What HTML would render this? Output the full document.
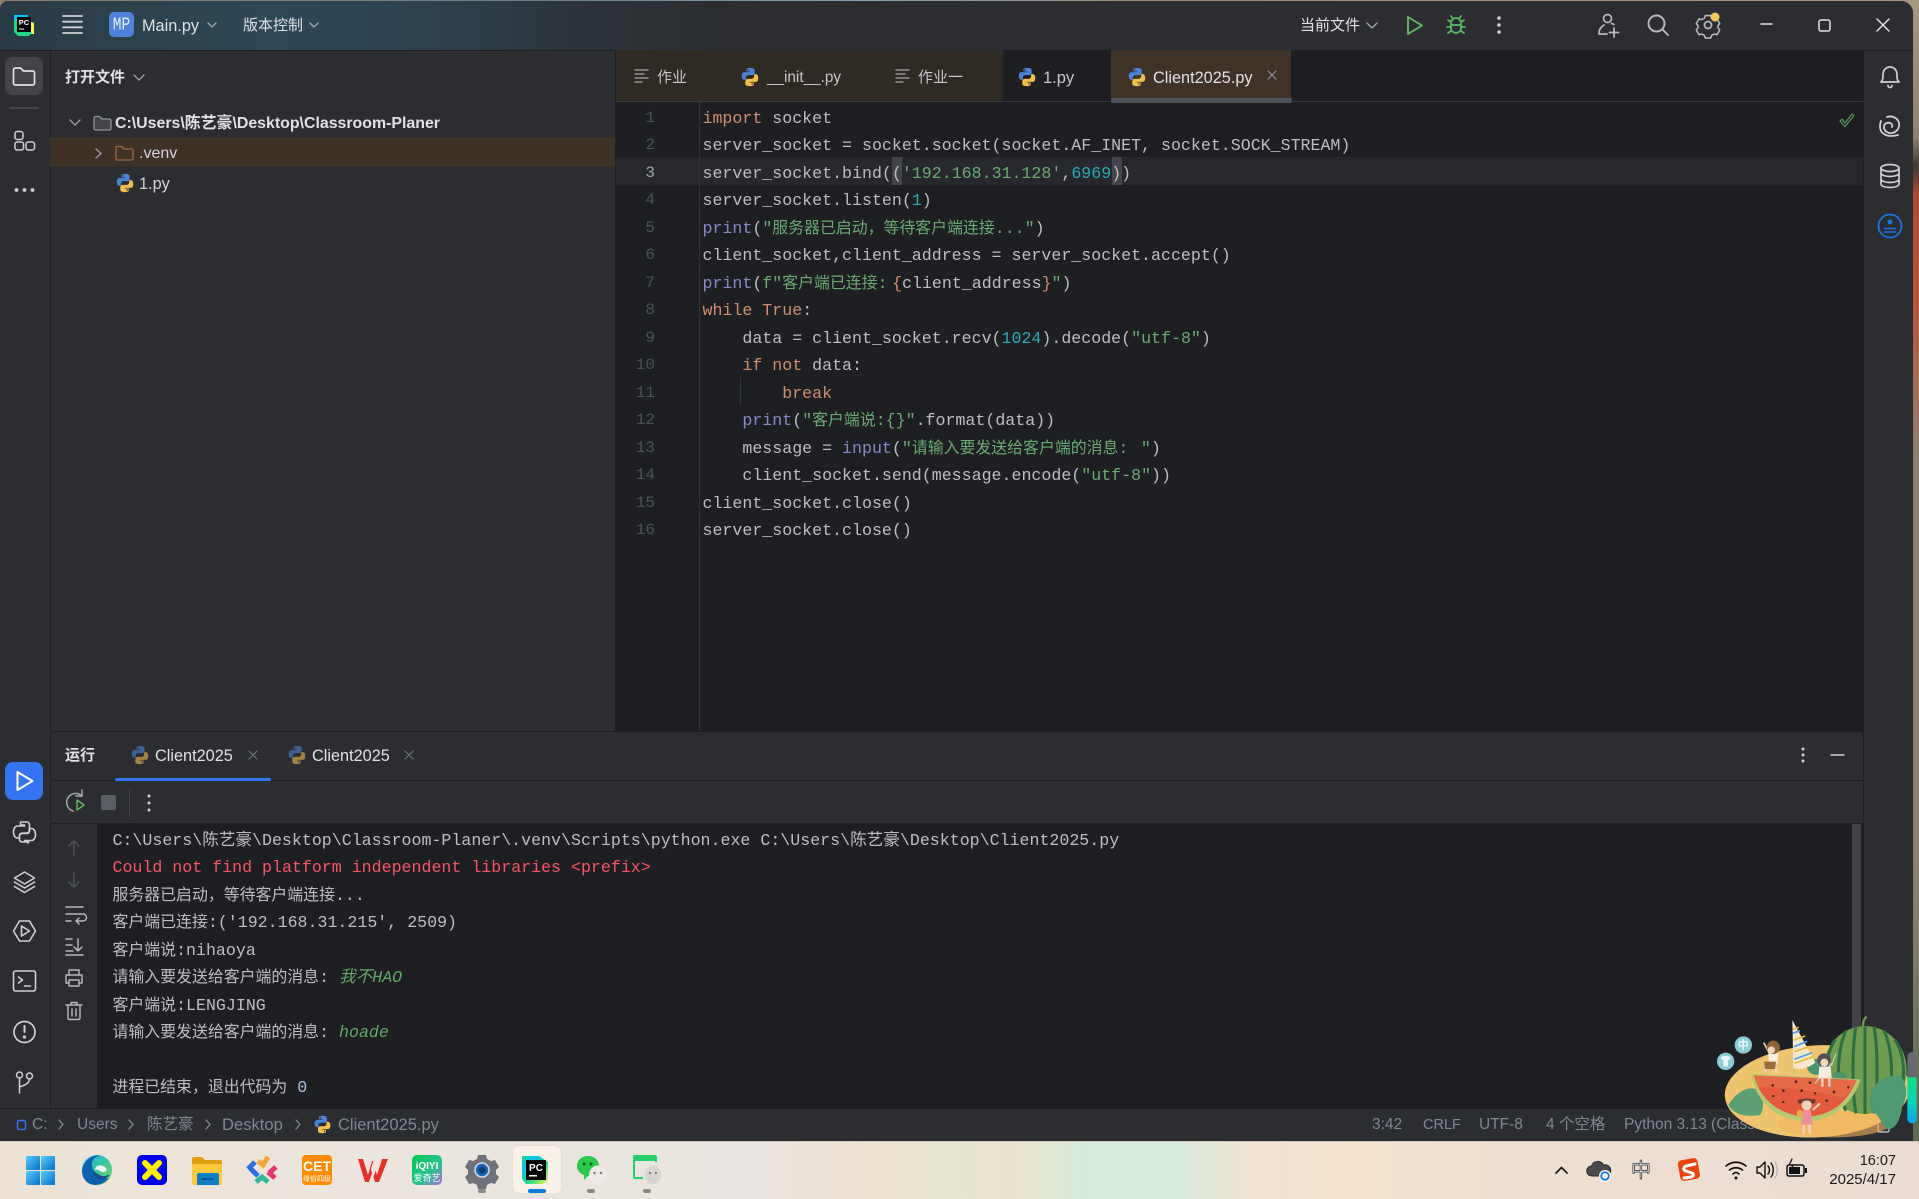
<!DOCTYPE html>
<html lang="zh">
<head>
<meta charset="utf-8">
<title>PyCharm</title>
<style>
html,body{margin:0;padding:0;width:1919px;height:1199px;overflow:hidden;background:#8f8270}
body{position:relative;font-family:"Liberation Sans","Noto Sans CJK SC",sans-serif;color:#ced0d6}
.b{position:absolute}
.t{position:absolute;white-space:pre;font-size:15.5px;line-height:22px;height:22px}
.m{position:absolute;white-space:pre;font-family:"Liberation Mono","Noto Sans CJK SC",monospace;font-size:16.63px;line-height:27.5px;height:27.5px;color:#bcbec4}
.n{position:absolute;width:40px;text-align:right;left:615px;font-family:"Liberation Mono",monospace;font-size:16px;line-height:27.5px;color:#4b5059}
.k{color:#cf8e6d}.s{color:#6aab73}.d{color:#2aacb8}.f{color:#8888c6}
.c{font-size:15.9px}
.h{background:#43454a}
.i{color:#5fa865;font-style:italic}
.st{color:#7f8894;font-size:15.5px}
svg text{font-family:"Liberation Sans","Noto Sans CJK SC",sans-serif}
</style>
</head>
<body>
<!-- wallpaper -->
<div class="b" style="left:0;top:0;width:1919px;height:2px;background:linear-gradient(90deg,#8a7d6c,#6b7f88 30%,#88a0b0 45%,#9a8a76 60%,#a89680 100%)"></div>
<div class="b" style="left:1905px;top:0;width:14px;height:1141px;background:linear-gradient(180deg,#a89680 0,#8f8270 12%,#3f3a33 14.5%,#a94a36 17%,#b5553c 26%,#8f8270 40%,#8f8270 75%,#5c6b50 100%)"></div>

<!-- window -->
<div class="b" style="left:0;top:1px;width:1913px;height:1140px;background:#2b2d30;border-radius:8px 12px 0 0;overflow:hidden">
  <div class="b" style="left:0;top:0;width:1913px;height:49px;background:linear-gradient(90deg,#2a3a44 0,#2f4855 14%,#2e4452 20%,#2c3439 30%,#2b2d30 38%)"></div>
  <div class="b" style="left:0;top:49px;width:1913px;height:1px;background:#1e1f22"></div>
</div>

<!-- project panel -->
<div class="b" style="left:50px;top:50px;width:1px;height:1058px;background:#1e1f22"></div>
<div class="b" style="left:615px;top:50px;width:1px;height:681px;background:#1e1f22"></div>
<div class="b" style="left:50px;top:137px;width:565px;height:30px;background:#3e3126"></div>

<!-- editor -->
<div class="b" style="left:616px;top:50px;width:1247px;height:681px;background:#1e1f22"></div>
<div class="b" style="left:616px;top:50px;width:387px;height:51px;background:#302a24"></div>
<div class="b" style="left:1111px;top:50px;width:180px;height:51px;background:#3f3226"></div>
<div class="b" style="left:616px;top:101px;width:1247px;height:1px;background:#36383d"></div>
<div class="b" style="left:1111px;top:98px;width:181px;height:5px;background:#4e5157;border-radius:2px"></div>
<div class="b" style="left:616px;top:157px;width:1247px;height:28px;background:#26282e"></div>
<div class="b" style="left:699px;top:102px;width:1px;height:629px;background:#313438"></div>
<div class="b" style="left:740px;top:377px;width:1px;height:28px;background:#313438"></div>
<div class="b h" style="left:892px;top:157px;width:10px;height:28px"></div>
<div class="b h" style="left:1112px;top:157px;width:10px;height:28px"></div>

<!-- run panel -->
<div class="b" style="left:51px;top:731px;width:1812px;height:1px;background:#1e1f22"></div>
<div class="b" style="left:51px;top:780px;width:1812px;height:1px;background:#1e1f22"></div>
<div class="b" style="left:115px;top:778px;width:156px;height:3px;background:#3574f0;border-radius:2px"></div>
<div class="b" style="left:98px;top:824px;width:1765px;height:284px;background:#1e1f22"></div>
<div class="b" style="left:51px;top:823px;width:1812px;height:1px;background:#1e1f22"></div>
<div class="b" style="left:97px;top:824px;width:1px;height:284px;background:#1e1f22"></div>
<div class="b" style="left:1852px;top:824px;width:9px;height:230px;background:#414347;border-radius:1px"></div>
<div class="b" style="left:129px;top:790px;width:1px;height:27px;background:#43454a"></div>

<!-- right stripe -->
<div class="b" style="left:1863px;top:50px;width:1px;height:1058px;background:#1e1f22"></div>
<!-- status -->
<div class="b" style="left:0;top:1108px;width:1913px;height:33px;background:#2b2d30;border-top:1px solid #1e1f22;box-sizing:border-box"></div>

<!-- left stripe boxes -->
<div class="b" style="left:5px;top:57px;width:38px;height:38px;background:#43454a;border-radius:8px"></div>
<div class="b" style="left:9px;top:107px;width:30px;height:2px;background:#43454a"></div>
<div class="b" style="left:5px;top:762px;width:38px;height:38px;background:#3574f0;border-radius:8px"></div>

<!-- taskbar -->
<div class="b" style="left:0;top:1141px;width:1919px;height:58px;background:linear-gradient(90deg,#ece3d6 0,#ebe5dd 350px,#e9e4df 760px,#eee2d0 880px,#e6e5cf 940px,#e9e4cc 1020px,#d5ebdc 1090px,#d5ebdc 1170px,#f0e3d2 1250px,#f4e2cd 1350px,#eee0d0 1500px,#ebdcd3 1919px)"></div>
<div class="b" style="left:0;top:1141px;width:1919px;height:1px;background:#d4c8bb"></div>
<div class="b" style="left:513px;top:1146px;width:48px;height:47px;background:#f8f2e8;border-radius:5px;box-shadow:0 0 1px #cfc6b8"></div>

<!-- ICONS -->
<svg class="b" style="left:0;top:0" width="1919" height="1199" viewBox="0 0 1919 1199" fill="none" stroke-linecap="round" stroke-linejoin="round">
<defs>
<symbol id="py" viewBox="0 0 24 24" overflow="visible">
  <path fill="#4a82d4" d="M11.9 2C7.6 2 8 3.8 8 3.8V6h4.2v.7H5.9S3 6.4 3 10.8s2.6 4.3 2.6 4.3h1.9v-2.2s-.1-2.9 2.8-2.9h4.2s2.6 0 2.6-2.6V4.7S17.5 2 11.9 2zM9.600 3.400a.8.8 0 1 1 0 1.600.8.8 0 0 1 0-1.600z"/>
  <path fill="#f0bf50" d="M12.100 22c4.300 0 3.900-1.800 3.900-1.800V18h-4.200v-.7h6.300s2.900.3 2.900-4.100-2.600-4.300-2.600-4.300h-1.900v2.200s.1 2.900-2.800 2.900H9.500s-2.600 0-2.600 2.600v3.100S6.500 22 12.100 22zm2.300-1.400a.8.8 0 1 1 0-1.600.8.8 0 0 1 0 1.600z"/>
</symbol>
<linearGradient id="pc" x1="0" y1="0" x2="1" y2="1"><stop offset="0" stop-color="#21d789"/><stop offset=".25" stop-color="#07c3f2"/><stop offset=".6" stop-color="#21d789"/><stop offset="1" stop-color="#fcf84a"/></linearGradient>
<linearGradient id="wg" x1="0" y1="0" x2="1" y2="1"><stop offset="0" stop-color="#5ccbfa"/><stop offset="1" stop-color="#0470c8"/></linearGradient>
<linearGradient id="edge" x1="0" y1="0" x2="1" y2="1"><stop offset="0" stop-color="#2fa9e0"/><stop offset=".5" stop-color="#38c6a0"/><stop offset="1" stop-color="#7ed957"/></linearGradient>
<linearGradient id="iq" x1="0" y1="0" x2="1" y2="1"><stop offset="0" stop-color="#00c853"/><stop offset=".6" stop-color="#2bc08f"/><stop offset="1" stop-color="#a66fd8"/></linearGradient>
</defs>

<!-- title bar -->
<g transform="translate(14,14)">
  <path fill="#07c3f2" d="M0 1h14v8H0z"/>
  <path fill="#fcf84a" d="M12 6l8 3v11h-6z"/>
  <path fill="#21d789" d="M0 6h6v16H4l-4-4z"/>
  <path fill="#21d789" d="M4 18h14l-3 4H6z"/>
  <rect x="3" y="3" width="14" height="15" fill="#000"/>
  <text x="10" y="11" fill="#fff" font-size="7.500" font-weight="700" text-anchor="middle">PC</text>
  <rect x="5" y="14.500" width="5" height="1" fill="#fff"/>
</g>
<g stroke="#ced0d6" stroke-width="1.800"><path d="M63 16h19M63 21.700h19M63 27.300h19M63 33h19"/></g>
<rect x="109" y="12" width="25" height="25" rx="5" fill="#4e82d8"/>
<g stroke="#a4a7ad" stroke-width="1.300">
  <path d="M208 23l4 4 4-4M310 23l4 4 4-4M1367 23l5 5 5-5"/>
</g>
<path d="M1408 17l14 8.500-14 8.500z" stroke="#5fb865" stroke-width="1.900"/>
<g transform="translate(1456,25)" stroke="#5fb865" stroke-width="1.700">
  <path d="M-5-2a5 5 0 0 1 10 0v5a5 5 0 0 1-10 0zM-5 0h10M-3-6l-2-3M3-6l2-3M-5-3l-3-2M5-3l3-2M-5 2h-4M5 2h4M-5 6l-3 2M5 6l3 2"/>
</g>
<g fill="#ced0d6"><circle cx="1499" cy="18" r="1.800"/><circle cx="1499" cy="25" r="1.800"/><circle cx="1499" cy="32" r="1.800"/></g>
<g transform="translate(1609,25)" stroke="#b8bac0" stroke-width="1.700">
  <circle cx="-1.500" cy="-6.500" r="4"/><path d="M-10 9c0-5 2-7 5-9M5-.5c-1-.5-2-1-2.500-1M-10 9h8M5 3v9M0.500 7.500h9"/>
</g>
<g transform="translate(1658,25)" stroke="#b8bac0" stroke-width="1.900"><circle cx="-1.500" cy="-1.500" r="8"/><path d="M4.500 4.500l5.500 5.500"/></g>
<g transform="translate(1708,25)" stroke="#b8bac0" stroke-width="1.700">
  <circle r="3.500"/><path d="M-3-10.500h6l1 3 3 1.500 3-.8 3 5.300-2 2.500v2l2 2.500-3 5.300-3-.8-3 1.500-1 3h-6l-1-3-3-1.500-3 .8-3-5.300 2-2.500v-2l-2-2.500 3-5.300 3 .8 3-1.500z" transform="scale(.9)"/>
</g>
<circle cx="1715" cy="17" r="4.500" fill="#f2c55c"/>
<g stroke="#e0e1e4" stroke-width="1.500">
  <path d="M1761 24h11"/><rect x="1819" y="20" width="11" height="11" rx="2"/><path d="M1877 19l12 12M1889 19l-12 12"/>
</g>

<!-- left stripe top -->
<path transform="translate(24.500,76)" stroke="#dfe1e5" stroke-width="1.700" d="M-11-6a2 2 0 0 1 2-2h5l3 3h9a2 2 0 0 1 2 2v10a2 2 0 0 1-2 2h-17a2 2 0 0 1-2-2z"/>
<g stroke="#ced0d6" stroke-width="1.500" fill="none">
  <rect x="15" y="131.500" width="8" height="8" rx="2.200"/><rect x="15" y="142" width="8.500" height="8" rx="2.200"/><rect x="26" y="142" width="8.500" height="8" rx="2.200"/>
</g>
<g fill="#ced0d6"><circle cx="16.500" cy="190" r="1.900"/><circle cx="24.500" cy="190" r="1.900"/><circle cx="32.500" cy="190" r="1.900"/></g>

<!-- project header & tree -->
<path d="M134 75l5 5 5-5M70 120l5 5 5-5" stroke="#9da0a8" stroke-width="1.300"/>
<path d="M96 149l5 4.500-5 4.500" stroke="#9da0a8" stroke-width="1.300"/>
<path d="M94 118a1.500 1.500 0 0 1 1.500-1.500h4l2.500 2.500h7.500a1.500 1.500 0 0 1 1.500 1.500v8a1.500 1.500 0 0 1-1.500 1.500h-14a1.500 1.500 0 0 1-1.500-1.500z" stroke="#8f9299" stroke-width="1.300" fill="#43454a"/>
<path d="M116 148a1.500 1.500 0 0 1 1.500-1.500h4l2.500 2.500h7.500a1.500 1.500 0 0 1 1.500 1.500v8a1.500 1.500 0 0 1-1.500 1.500h-14a1.500 1.500 0 0 1-1.500-1.500z" stroke="#a0684a" stroke-width="1.300"/>
<use href="#py" x="114" y="172" width="22" height="22"/>

<!-- editor tabs -->
<g stroke="#a3a6ad" stroke-width="1.300">
  <path d="M635 70h13M635 74h9M635 78h13M635 82h7"/>
  <path d="M896 70h13M896 74h9M896 78h13M896 82h7"/>
</g>
<use href="#py" x="739" y="66" width="22" height="22"/>
<use href="#py" x="1016" y="66" width="22" height="22"/>
<use href="#py" x="1126" y="66" width="22" height="22"/>
<path d="M1268 71l8 8M1276 71l-8 8" stroke="#8b8e94" stroke-width="1.200"/>
<path d="M1842 119l3 4 7-9 2 1.500-9 11-5-5.500z" stroke="#57965c" stroke-width="1.200"/>

<!-- right stripe icons -->
<g transform="translate(1890,75)" stroke="#ced0d6" stroke-width="1.700">
  <path d="M-9 7c2-2 2-4 2-7 0-5 3-8 7-8s7 3 7 8c0 3 0 5 2 7z"/><path d="M-2 10.500a2 2 0 0 0 4 0"/>
</g>
<g transform="translate(1890,126)" stroke="#ced0d6" stroke-width="1.800">
  <path d="M-3-9c6-2 13 2 12 9-1 6-8 9-12 6-4-2-4-8 0-9 3-1 6 1 5 4M-9-5c-2 5-1 11 3 13 4 3 10 2 14 1"/>
</g>
<g transform="translate(1890,176)" stroke="#ced0d6" stroke-width="1.700">
  <ellipse cy="-8" rx="9" ry="3.500"/><path d="M-9-8v16c0 2 4 3.500 9 3.500s9-1.500 9-3.500v-16M-9-3c0 2 4 3.500 9 3.500s9-1.500 9-3.500M-9 3c0 2 4 3.500 9 3.500s9-1.500 9-3.500"/>
</g>
<g transform="translate(1890,226)">
  <circle r="11.500" stroke="#1577e0" stroke-width="1.800"/><circle cy="-4" r="2.500" fill="#1577e0"/><path d="M-5.500 2.500h11M-5.500 6h11" stroke="#1577e0" stroke-width="1.600"/>
</g>

<!-- run tabs -->
<use href="#py" x="129" y="744" width="22" height="22" opacity=".6"/>
<use href="#py" x="286" y="744" width="22" height="22" opacity=".6"/>
<path d="M249 751l8 8M257 751l-8 8M405 751l8 8M413 751l-8 8" stroke="#6f737a" stroke-width="1.200"/>
<g fill="#ced0d6"><circle cx="1803" cy="749" r="1.500"/><circle cx="1803" cy="755" r="1.500"/><circle cx="1803" cy="761" r="1.500"/></g>
<path d="M1831 755h13" stroke="#ced0d6" stroke-width="1.400"/>

<!-- run toolbar -->
<path d="M82 796a9 9 0 1 0-9 15" stroke="#a6a9b0" stroke-width="1.500"/>
<path d="M82 790v6h-6" stroke="#a6a9b0" stroke-width="1.500"/>
<path d="M77 800l7 5-7 5z" stroke="#5fb865" stroke-width="1.400"/>
<rect x="101" y="795" width="15" height="15" rx="2" fill="#5a5d63"/>
<g fill="#ced0d6"><circle cx="149" cy="796" r="1.500"/><circle cx="149" cy="803" r="1.500"/><circle cx="149" cy="810" r="1.500"/></g>

<!-- left stripe bottom -->
<path d="M17.500 772l15 9-15 9z" stroke="#fff" stroke-width="2"/>
<g transform="translate(24.500,832)" stroke="#ced0d6" stroke-width="1.600">
  <path d="M-3-10h5c2 0 3 1 3 3v5c0 1.500-1 3-3 3h-4c-2 0-3 1-3 3v2h-2c-2 0-4-2-4-6s2-6 4-6h7v-1H-4v-2c0-1 0-1 1-1z"/>
  <path d="M3 10h-5c-2 0-3-1-3-3v-3c0-1.500 1-2.500 3-2.500h4c2 0 3-1 3-3v-2h2c2 0 4 2 4 6s-2 6-4 6h-7v1H4v1c0 1 0 0-1 0z"/>
</g>
<g transform="translate(24.500,882)" stroke="#ced0d6" stroke-width="1.600">
  <path d="M0-10l10 6-10 6-10-6zM-10 0l10 6 10-6M-10 4.500l10 6 10-6"/>
</g>
<g transform="translate(24.500,931)" stroke="#ced0d6" stroke-width="1.600">
  <path d="M-5-10h10l6 10-6 10H-5l-6-10z"/><path d="M-3-5l8 5-8 5z"/>
</g>
<g transform="translate(24.500,981)" stroke="#ced0d6" stroke-width="1.600">
  <rect x="-11" y="-10" width="22" height="20" rx="2"/><path d="M-6-4l4 3-4 3M0 5h6"/>
</g>
<g transform="translate(24.500,1032)" stroke="#ced0d6" stroke-width="1.700">
  <circle r="10.500"/><path d="M0-6v6" stroke-width="2"/><circle cy="5" r=".8"/>
</g>
<g transform="translate(24.500,1082)" stroke="#ced0d6" stroke-width="1.500">
  <circle cx="-5" cy="-7" r="3"/><circle cx="5" cy="-6" r="3"/><path d="M-5-4v15M5-3c0 4-4 6-10 8"/>
</g>

<!-- console gutter -->
<g stroke="#4f5257" stroke-width="1.400">
  <path d="M74 841v14M69 846l5-5 5 5M74 873v14M69 882l5 5 5-5"/>
</g>
<g stroke="#b8bac0" stroke-width="1.400">
  <path d="M66 907h17M66 914h17a3 3 0 0 1 0 7h-6M79 918l-3 3 3 3M66 921h5"/>
  <path d="M66 939h6M66 945h6M66 951h7M66 955h17M78 939v12M74 947l4 4 4-4"/>
  <path d="M69 975v-5h10v5M66 975h16v8h-3M69 983h-3v-8M69 980h10v6H69z"/>
  <path d="M66 1005h16M71 1005v-2.500h6v2.500M68 1005v13a1.500 1.500 0 0 0 1.500 1.500h9A1.500 1.500 0 0 0 80 1018v-13M72 1009v7M76 1009v7"/>
</g>

<!-- status bar -->
<rect x="17.500" y="1120.500" width="8" height="9" rx="1.500" stroke="#3574f0" stroke-width="1.400"/>
<g stroke="#8a8e95" stroke-width="1.200">
  <path d="M59 1120l4 4.500-4 4.500M129 1120l4 4.500-4 4.500M206 1120l4 4.500-4 4.500M296 1120l4 4.500-4 4.500"/>
</g>
<use href="#py" x="312" y="1114" width="21" height="21"/>
<rect x="1878" y="1120" width="11" height="12" rx="1.500" stroke="#ced0d6" stroke-width="1.200"/>

<!-- taskbar icons -->
<g fill="url(#wg)"><rect x="26" y="1156" width="14" height="14" rx="1"/><rect x="41" y="1156" width="14" height="14" rx="1"/><rect x="26" y="1171" width="14" height="14" rx="1"/><rect x="41" y="1171" width="14" height="14" rx="1"/></g>
<g transform="translate(97,1170)">
  <circle r="15" fill="url(#edge)"/>
  <path d="M-15 1C-14-9-5-15 3-15c-9 3-9 10-7 14C-2 5 3 10 12 8 8 13 2 15-2 15-10 15-15 8-15 1z" fill="#0f62ae"/>
  <path d="M-2 0c0-5 6-6 10-3 3 3 1 5-2 5-4 0-3-3-8-2z" fill="#edf3ee"/>
  <path d="M-4 0c-1 7 5 11 11 9 3-1 5-3 6-5-4 2-7 3-10 1-3-1-5-3-7-5z" fill="#1c4e96"/>
</g>
<rect x="137" y="1155" width="30" height="30" rx="5" fill="#0000e8"/>
<path d="M145 1163l14 14M159 1163l-14 14" stroke="#ffef00" stroke-width="6" stroke-linecap="round"/>
<path d="M192 1159a2 2 0 0 1 2-2h8l3 3h15a2 2 0 0 1 2 2v20h-30z" fill="#dfa012"/>
<path d="M192 1164h30v19a2 2 0 0 1-2 2h-26a2 2 0 0 1-2-2z" fill="#fcc93f"/>
<path d="M197 1175a2 2 0 0 1 2-2h18a2 2 0 0 1 2 2v10h-22z" fill="#0f7fc4"/><path d="M202 1179h11" stroke="#063e6e" stroke-width="1.200"/>
<g stroke-width="5" stroke-linecap="butt" stroke-linejoin="miter">
  <path d="M248 1169l7-7" stroke="#2f6fe0"/><path d="M250 1168l8 8" stroke="#2f6fe0"/>
  <path d="M268 1157l-5 8-5-4" stroke="#f2a73a"/>
  <path d="M268 1172l7 6M276 1167l-7 6" stroke="#e8356d"/>
  <path d="M256 1182l6-5 6 5" stroke="#35b59b"/>
</g>
<rect x="302" y="1155" width="30" height="30" rx="4" fill="#ff8c00"/>
<text x="317" y="1171" fill="#fff" font-size="14" font-weight="700" text-anchor="middle">CET</text>
<text x="317" y="1181" fill="#fff" font-size="7" text-anchor="middle">缘俗四级</text>
<path d="M358 1159h5l5 16 4-14h1l4 14 5-16h6l-9 23h-4l-3-9-3 9h-4z" fill="#e3312a"/>
<path d="M371 1169l2-7 3 8-3 8z" fill="#fff" opacity=".85"/>
<rect x="412" y="1155" width="30" height="30" rx="5" fill="url(#iq)"/>
<text x="427" y="1169" fill="#fff" font-size="10" font-weight="700" text-anchor="middle">iQIYI</text>
<text x="427" y="1181" fill="#fff" font-size="9" text-anchor="middle">爱奇艺</text>
<g transform="translate(482,1170)">
  <path fill="#6f7278" d="M-4-15h8l1 4 4 2 4-1 4 7-3 3v4l3 3-4 7-4-1-4 2-1 4h-8l-1-4-4-2-4 1-4-7 3-3v-4l-3-3 4-7 4 1 4-2z"/>
  <circle r="7" fill="#1a66b8" stroke="#d7dde4" stroke-width="1.500"/><circle r="3.500" fill="#103f78"/>
</g>
<g transform="translate(522,1155)">
  <path fill="url(#pc)" d="M0 1h17l9 6v18l-5 4H4l-4-5z"/>
  <rect x="4" y="5" width="20" height="20" fill="#000"/>
  <text x="14" y="16" fill="#fff" font-size="10" font-weight="700" text-anchor="middle">PC</text>
  <rect x="7" y="20" width="8" height="1.500" fill="#fff"/>
</g>
<rect x="528" y="1189" width="18" height="4" rx="2" fill="#0a7cd8"/>
<g transform="translate(591,1170)">
  <path d="M-14-4c0-6 5-10 11-10S8-10 8-4 3 6-3 6l-4 4 0-5c-4-1-7-5-7-9z" fill="#2dc94e"/>
  <circle cx="-7" cy="-6" r="1.500" fill="#0a6620"/><circle cx="0" cy="-6" r="1.500" fill="#0a6620"/>
  <ellipse cx="7" cy="5" rx="9" ry="9.500" fill="#eceae6"/><circle cx="3.500" cy="3" r="1.200" fill="#777"/><circle cx="10" cy="3" r="1.200" fill="#777"/>
</g>
<g transform="translate(646,1170)">
  <path d="M-11-15H9a2 2 0 0 1 2 2v4H-11v16h-2V-13a2 2 0 0 1 2-2z" fill="#24d06b"/>
  <path d="M-13-9h2V7h8v2h-8a2 2 0 0 1-2-2zM9-11h2v3H9z" fill="#24d06b"/>
  <ellipse cx="7" cy="5" rx="8" ry="9" fill="#d6d5d1"/><circle cx="4" cy="3" r="1.100" fill="#777"/><circle cx="10" cy="3" r="1.100" fill="#777"/>
</g>
<g fill="#8c8a86"><rect x="478" y="1189" width="8" height="4" rx="2"/><rect x="587" y="1189" width="8" height="4" rx="2"/><rect x="643" y="1189" width="8" height="4" rx="2"/></g>

<!-- tray -->
<path d="M1556 1173l5.500-5.500 5.500 5.500" stroke="#1a1a1a" stroke-width="1.700"/>
<g transform="translate(1600,1170)">
  <path d="M-8 6a5 5 0 0 1-.5-10 6.500 6.500 0 0 1 12-1 5 5 0 0 1 3 11z" fill="#4a4a4c" stroke="#2a2a2a" stroke-width="1"/>
  <circle cx="5" cy="6" r="6" fill="#fff"/><circle cx="5" cy="6" r="3.800" stroke="#1178d8" stroke-width="1.800"/>
</g>
<text x="1641" y="1177" fill="#fff" font-size="20" text-anchor="middle" stroke="#222" stroke-width=".7">中</text>
<rect x="1680" y="1160" width="18" height="19" rx="3" fill="#e8450f" transform="rotate(-10 1689 1170)" stroke="#e8450f" stroke-width="2"/>
<path d="M1695 1164l-9 2c-3 1-3 4 0 5l6 2c2 1 2 3-1 4l-7 1" stroke="#fff" stroke-width="3"/>
<g stroke="#111" stroke-width="1.700">
  <path d="M1726 1166c6-5 14-5 20 0M1729.500 1170c4-3 9-3 13 0M1733 1174c2-2 4-2 6 0"/>
</g>
<circle cx="1736" cy="1178" r="1.500" fill="#111"/>
<g stroke="#111" stroke-width="1.400">
  <path d="M1757 1167h3l5-5v16l-5-5h-3zM1768 1166c2 2 2 6 0 8M1771 1163c3 4 3 10 0 14"/>
</g>
<path d="M1775 1162c3 5 3 11 0 16" stroke="#aaa" stroke-width="1"/>
<rect x="1787" y="1165" width="17" height="11" rx="2" stroke="#111" stroke-width="1.500"/>
<rect x="1789" y="1167" width="11" height="7" fill="#111"/><rect x="1805" y="1168" width="2" height="5" fill="#111"/>
<path d="M1792 1159l-3 6h4l-2 5" stroke="#111" stroke-width="1.300"/>
</svg>

<!-- TEXT -->
<div class="t" style="left:142px;top:15px;color:#dfe1e5;font-size:16.300px">Main.py</div>
<div class="t" style="left:243px;top:15px;color:#dfe1e5;font-size:15px">版本控制</div>
<div class="t" style="left:1300px;top:15px;color:#dfe1e5;font-size:15px">当前文件</div>
<div class="b" style="left:109px;top:14px;width:25px;height:25px;line-height:25px;text-align:center;font-family:'Liberation Mono',monospace;font-size:14.500px;color:#e6edf8;white-space:pre;transform:scaleY(1.250)">MP</div>

<div class="t" style="left:65px;top:67px;font-weight:700;color:#dfe1e5;font-size:15px">打开文件</div>
<div class="t" style="left:115px;top:113px;font-weight:700;color:#dfe1e5;font-size:15.900px">C:\Users\陈艺豪\Desktop\Classroom-Planer</div>
<div class="t" style="left:139px;top:143px;color:#d2d4d9;font-size:16px">.venv</div>
<div class="t" style="left:139px;top:173px;color:#d2d4d9;font-size:16.300px">1.py</div>

<div class="t" style="left:657px;top:67px;color:#c4c6cb;font-size:15px">作业</div>
<div class="t" style="left:767px;top:67px;color:#c4c6cb;font-size:15.300px">__init__.py</div>
<div class="t" style="left:918px;top:67px;color:#c4c6cb;font-size:15px">作业一</div>
<div class="t" style="left:1043px;top:67px;color:#c4c6cb;font-size:16.500px">1.py</div>
<div class="t" style="left:1153px;top:67px;color:#dfe1e5;font-size:16.300px">Client2025.py</div>

<!-- gutter numbers -->
<div class="n" style="top:104.500px">1</div>
<div class="n" style="top:132px">2</div>
<div class="n" style="top:159.500px;color:#a1a3ab">3</div>
<div class="n" style="top:187px">4</div>
<div class="n" style="top:214.500px">5</div>
<div class="n" style="top:242px">6</div>
<div class="n" style="top:269.500px">7</div>
<div class="n" style="top:297px">8</div>
<div class="n" style="top:324.500px">9</div>
<div class="n" style="top:352px">10</div>
<div class="n" style="top:379.500px">11</div>
<div class="n" style="top:407px">12</div>
<div class="n" style="top:434.500px">13</div>
<div class="n" style="top:462px">14</div>
<div class="n" style="top:489.500px">15</div>
<div class="n" style="top:517px">16</div>

<!-- code -->
<div class="m" style="left:702.500px;top:104.500px"><span class="k">import</span> socket</div>
<div class="m" style="left:702.500px;top:132px">server_socket = socket.socket(socket.AF_INET, socket.SOCK_STREAM)</div>
<div class="m" style="left:702.500px;top:159.500px">server_socket.bind((<span class="s">'192.168.31.128'</span>,<span class="d">6969</span>))</div>
<div class="m" style="left:702.500px;top:187px">server_socket.listen(<span class="d">1</span>)</div>
<div class="m" style="left:702.500px;top:214.500px"><span class="f">print</span>(<span class="s">"<span class="c">服务器已启动，等待客户端连接</span>..."</span>)</div>
<div class="m" style="left:702.500px;top:242px">client_socket,client_address = server_socket.accept()</div>
<div class="m" style="left:702.500px;top:269.500px"><span class="f">print</span>(<span class="s">f"<span class="c">客户端已连接</span><span style="letter-spacing:4.500px">:</span></span><span class="k">{</span>client_address<span class="k">}</span><span class="s">"</span>)</div>
<div class="m" style="left:702.500px;top:297px"><span class="k">while True</span>:</div>
<div class="m" style="left:702.500px;top:324.500px">    data = client_socket.recv(<span class="d">1024</span>).decode(<span class="s">"utf-8"</span>)</div>
<div class="m" style="left:702.500px;top:352px">    <span class="k">if not</span> data:</div>
<div class="m" style="left:702.500px;top:379.500px">        <span class="k">break</span></div>
<div class="m" style="left:702.500px;top:407px">    <span class="f">print</span>(<span class="s">"<span class="c">客户端说</span>:{}"</span>.format(data))</div>
<div class="m" style="left:702.500px;top:434.500px">    message = <span class="f">input</span>(<span class="s">"<span class="c">请输入要发送给客户端的消息</span><span style="letter-spacing:2.500px">:</span> "</span>)</div>
<div class="m" style="left:702.500px;top:462px">    client_socket.send(message.encode(<span class="s">"utf-8"</span>))</div>
<div class="m" style="left:702.500px;top:489.500px">client_socket.close()</div>
<div class="m" style="left:702.500px;top:517px">server_socket.close()</div>

<!-- run panel text -->
<div class="t" style="left:65px;top:745px;font-weight:700;color:#dfe1e5;font-size:15px">运行</div>
<div class="t" style="left:155px;top:745px;color:#dfe1e5;font-size:16.300px">Client2025</div>
<div class="t" style="left:312px;top:745px;color:#dfe1e5;font-size:16.300px">Client2025</div>

<div class="m" style="left:112.500px;top:826.600px">C:\Users\陈艺豪\Desktop\Classroom-Planer\.venv\Scripts\python.exe C:\Users\陈艺豪\Desktop\Client2025.py</div>
<div class="m" style="left:112.500px;top:854.100px;color:#f75464">Could not find platform independent libraries &lt;prefix&gt;</div>
<div class="m" style="left:112.500px;top:881.600px"><span class="c">服务器已启动，等待客户端连接</span>...</div>
<div class="m" style="left:112.500px;top:909.100px"><span class="c">客户端已连接</span>:('192.168.31.215', 2509)</div>
<div class="m" style="left:112.500px;top:936.600px"><span class="c">客户端说</span>:nihaoya</div>
<div class="m" style="left:112.500px;top:964.100px"><span class="c">请输入要发送给客户端的消息</span>: <span class="i">我不HAO</span></div>
<div class="m" style="left:112.500px;top:991.600px"><span class="c">客户端说</span>:LENGJING</div>
<div class="m" style="left:112.500px;top:1019.100px"><span class="c">请输入要发送给客户端的消息</span>: <span class="i">hoade</span></div>
<div class="m" style="left:112.500px;top:1074.100px"><span class="c">进程已结束，退出代码为</span> <span style="color:#a8c0e0">0</span></div>

<!-- status bar text -->
<div class="t st" style="left:32px;top:1114px">C:</div>
<div class="t st" style="left:77px;top:1114px">Users</div>
<div class="t st" style="left:147px;top:1114px">陈艺豪</div>
<div class="t st" style="left:222px;top:1114px;font-size:16.600px">Desktop</div>
<div class="t st" style="left:338px;top:1114px;font-size:16.500px">Client2025.py</div>
<div class="t st" style="left:1372px;top:1114px">3:42</div>
<div class="t st" style="left:1423px;top:1114px;font-size:14.500px">CRLF</div>
<div class="t st" style="left:1479px;top:1114px">UTF-8</div>
<div class="t st" style="left:1546px;top:1114px">4 个空格</div>
<div class="t st" style="left:1624px;top:1114px">Python 3.13 (Classroom-Planer)</div>

<!-- clock -->
<div class="t" style="right:23px;top:1150px;color:#1b1b1b;font-size:14.500px;text-align:right">16:07</div>
<div class="t" style="right:23px;top:1169px;color:#1b1b1b;font-size:15px;text-align:right">2025/4/17</div>

<!-- watermelon widget -->
<svg class="b" style="left:1700px;top:1000px" width="219" height="150" viewBox="0 0 657 450" fill="none">
  <ellipse cx="352" cy="274" rx="278" ry="138" transform="rotate(-3 352 274)" fill="#efc46f"/>
  <ellipse cx="400" cy="372" rx="170" ry="40" fill="#f3b35e" opacity=".6"/>
  <!-- whole melon -->
  <path d="M490 80c-2-12 0-22 10-30" stroke="#6f9a4e" stroke-width="7"/>
  <ellipse cx="495" cy="210" rx="125" ry="132" fill="#6f9c50"/>
  <g stroke="#2f6d42" stroke-width="9" fill="none">
    <path d="M495 80v262M468 80c-12 60-12 200 0 260M522 80c12 60 12 200 0 260M438 92c-30 60-30 190 0 240M552 92c30 60 30 190 0 240M406 118c-35 50-35 150 -2 205M584 118c35 50 35 150 2 205"/>
  </g>
  <!-- leaves -->
  <path d="M515 275c15-40 60-55 90-45 18 30 18 60 2 88-5 32-15 70-45 70-22-20-22-40-40-50-15-15-17-35-7-63z" fill="#4f9a72"/>
  <path d="M85 315c25-40 60-60 90-45 15 25 20 55 5 75-30 5-75 5-95-30z" fill="#5c9f74"/>
  <path d="M320 195c15-20 40-25 55-10 5 15 0 30-15 38-20 5-40-5-40-28z" fill="#4a9470"/>
  <path d="M400 225c10-15 35-10 40 5l-10 20-25-5z" fill="#4a9470"/>
  <!-- slice -->
  <path d="M153 222L482 238C455 320 390 362 320 364 230 362 170 310 153 222z" fill="#b6c971"/>
  <path d="M162 226L470 240C440 315 385 348 320 350 240 346 180 300 162 226z" fill="#e35a3c"/>
  <path d="M162 226L470 240C460 262 444 280 430 296 350 270 240 260 175 262z" fill="#ec7a52" opacity=".5"/>
  <g fill="#3d2a22">
    <circle cx="218" cy="256" r="4"/><circle cx="288" cy="245" r="4"/><circle cx="330" cy="248" r="4"/><circle cx="250" cy="272" r="4"/><circle cx="305" cy="272" r="4"/><circle cx="402" cy="276" r="4"/><circle cx="220" cy="288" r="3.500"/><circle cx="380" cy="302" r="4"/><circle cx="250" cy="306" r="3.500"/><circle cx="345" cy="280" r="3.500"/><circle cx="445" cy="262" r="3.500"/>
  </g>
  <!-- umbrella -->
  <path d="M277 60L346 188C325 205 300 210 280 205z" fill="#f6e8cf"/>
  <path d="M279 88L296 82M281 120L316 108M283 155L328 140M284 190L340 170" stroke="#f0b740" stroke-width="5"/>
  <path d="M278 100L300 92M282 140L322 124M283 178L336 158" stroke="#4f9fe0" stroke-width="5"/>
  <path d="M283 205v20" stroke="#c8b88e" stroke-width="3"/>
  <!-- kid 1 -->
  <path d="M208 160l-17-32" stroke="#f1d2bd" stroke-width="5"/>
  <path d="M196 215l4-25h25l5 30" stroke="#f1d2bd" stroke-width="7"/>
  <path d="M205 160h30l-3 30h-25z" fill="#f7efe0"/>
  <path d="M192 185h36l-3 22h-30z" fill="#9c6d3c"/>
  <circle cx="220" cy="142" r="20" fill="#8f6238"/><circle cx="214" cy="150" r="11" fill="#f1d2bd"/>
  <!-- kid 2 -->
  <path d="M408 160l-14 38M395 190l-50 60" stroke="#c9c4bc" stroke-width="4"/>
  <path d="M358 200h34l3 35h-40z" fill="#f6ede2"/>
  <path d="M367 230v30M388 230v30" stroke="#f1d2bd" stroke-width="7"/>
  <circle cx="372" cy="180" r="20" fill="#5a4f55"/><circle cx="373" cy="188" r="12" fill="#f3d7c4"/>
  <!-- kid 3 -->
  <path d="M338 330l22-20" stroke="#f1d2bd" stroke-width="6"/>
  <circle cx="300" cy="340" r="10" fill="#e9a94a"/>
  <path d="M310 330h22l6 44h-34z" fill="#ee8f9c"/>
  <path d="M312 374l-2 28M328 374l2 28" stroke="#f1d2bd" stroke-width="7"/>
  <circle cx="320" cy="316" r="15" fill="#f1d2bd"/>
  <path d="M298 306c10-14 36-14 46 0-14-6-32-6-46 0z" fill="#6a3d2e"/>
  <circle cx="300" cy="304" r="7" fill="#6a3d2e"/><circle cx="340" cy="304" r="7" fill="#6a3d2e"/>
  <!-- bubbles -->
  <circle cx="77" cy="184" r="26" fill="#8ccdd6"/>
  <path d="M62 172l8-4h14l8 4-4 9-4-2v20H70v-20l-4 2z" fill="#e8f6f7"/>
  <circle cx="130" cy="135" r="26" fill="#8ccdd6"/>
  <text x="130" y="147" fill="#e8f6f7" font-size="34" text-anchor="middle" font-weight="700">中</text>
  <!-- bar -->
  <path d="M622 170a14 14 0 0 1 28 0v70h-28z" fill="#666a70"/>
  <path d="M622 232h28v124a14 14 0 0 1-28 0z" fill="url(#bar)"/>
  <defs><linearGradient id="bar" x1="0" y1="0" x2="0" y2="1"><stop offset="0" stop-color="#10e080"/><stop offset=".6" stop-color="#08d0c0"/><stop offset="1" stop-color="#0aa0f0"/></linearGradient></defs>
</svg>
</body>
</html>
